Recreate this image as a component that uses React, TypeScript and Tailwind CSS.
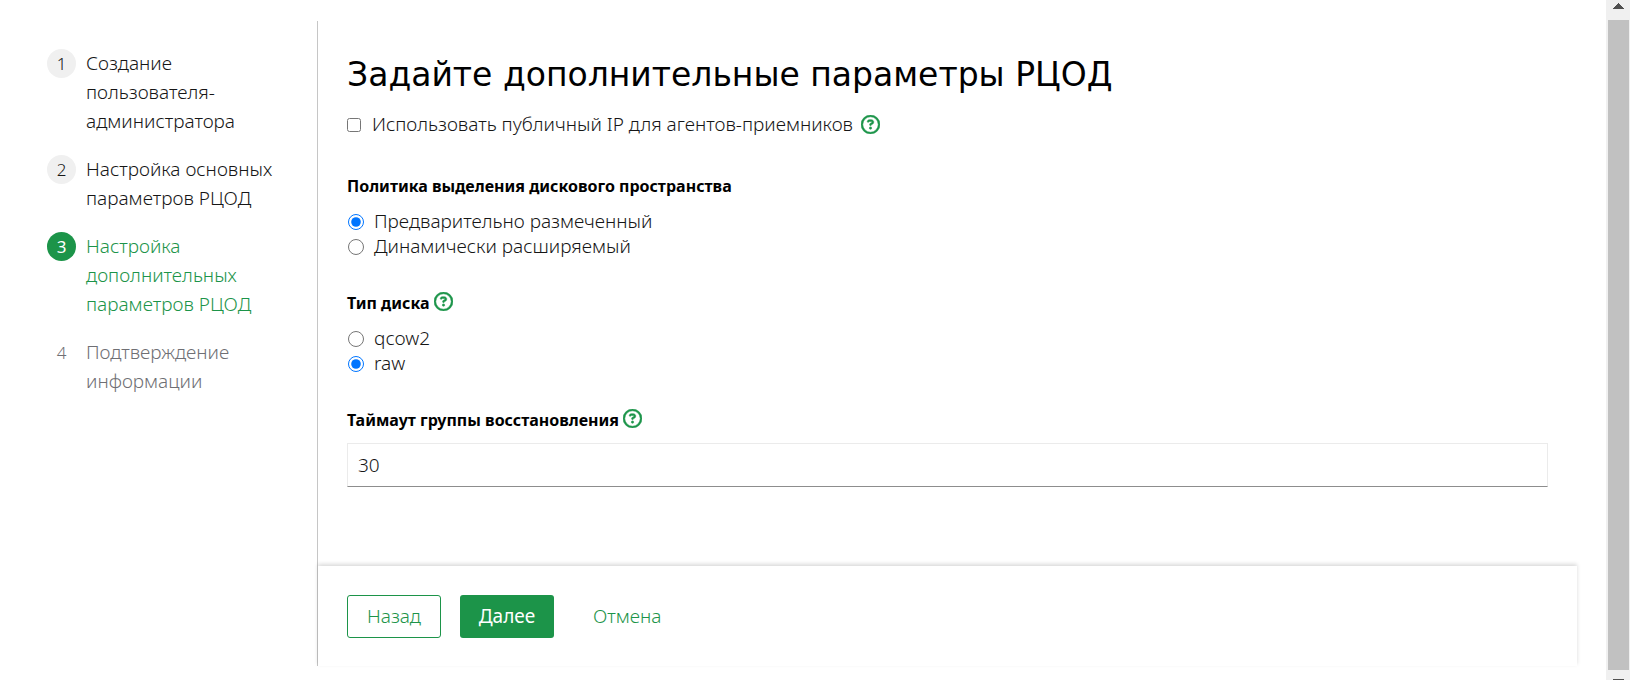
import { useState } from "react";
import { FaRegCircleQuestion } from "react-icons/fa6";

interface Step {
  title: string;
  state: "done" | "current" | "next";
}

const steps: Step[] = [
  { title: "Создание пользователя-администратора", state: "done" },
  { title: "Настройка основных параметров РЦОД", state: "done" },
  { title: "Настройка дополнительных параметров РЦОД", state: "current" },
  { title: "Подтверждение информации", state: "next" },
];

const textColor = {
  done: "text-[#161616]",
  current: "text-[#1c9449]",
  next: "text-[#6f6f74]",
};

const badgeColor = {
  done: "bg-[#f0f0f0] text-[#161616]",
  current: "bg-[#1c9449] text-white font-normal",
  next: "text-[#6f6f74]",
};

function Steps() {
  return (
    <ol className="flex w-[317px] shrink-0 flex-col gap-[19px] pt-7 pl-[47px] pr-8">
      {steps.map((step, i) => (
        <li key={step.title} className="flex gap-[10px]">
          <span className={`flex size-[29px] shrink-0 items-center justify-center rounded-full text-[17px] ${badgeColor[step.state]}`}>
            {i + 1}
          </span>
          <span className={`leading-[29px] ${textColor[step.state]}`}>{step.title}</span>
        </li>
      ))}
    </ol>
  );
}

function Help() {
  return (
    <button type="button" aria-label="Справка" className="flex h-[21px] shrink-0 items-center text-[#1c9449]">
      <FaRegCircleQuestion size={19} stroke="currentColor" strokeWidth={14} />
    </button>
  );
}

interface RadioGroupProps {
  name: string;
  title: string;
  options: string[];
  initial: string;
  help?: boolean;
}

function RadioGroup(props: RadioGroupProps) {
  const [value, setValue] = useState(props.initial);
  return (
    <fieldset className="mt-8">
      <div className="mb-[11px] flex items-start gap-1">
        <legend className="text-base font-bold text-black">{props.title}</legend>
        {props.help && <Help />}
      </div>
      {props.options.map((option) => (
        <label key={option} className="flex h-[25px] items-center gap-[10px]">
          <input
            type="radio"
            name={props.name}
            checked={value === option}
            onChange={() => setValue(option)}
            className="ml-px size-4"
          />
          {option}
        </label>
      ))}
    </fieldset>
  );
}

function ScrollBar() {
  return (
    <div aria-hidden="true" className="sticky top-0 flex h-screen w-6 shrink-0 flex-col overflow-hidden bg-[#f0f0f0] pr-px pl-[2px]">
      <svg viewBox="0 0 21 20" className="h-5 w-[21px] shrink-0" fill="#505050" shapeRendering="crispEdges">
        <path d="M10 3h1v1h1v1h1v1h1v1h1v1h1v1H5V8h1V7h1V6h1V5h1V4h1z" />
      </svg>
      <div className="flex-1 bg-[#c1c1c1]" />
      <div className="h-[10px] shrink-0">
        <svg viewBox="0 0 21 20" className="h-5 w-[21px]" fill="#505050" shapeRendering="crispEdges">
          <path d="M5 9h11v1h-1v1h-1v1h-1v1h-1v1h-1v1h-1v-1H9v-1H8v-1H7v-1H6v-1H5z" />
        </svg>
      </div>
    </div>
  );
}

export default function App() {
  const [publicIp, setPublicIp] = useState(false);
  const [timeout, setTimeoutValue] = useState("30");

  return (
    <div className="flex min-h-screen bg-white font-['Noto_Sans',sans-serif] text-[19px] font-light text-[#161616]">
      <div className="flex min-w-0 flex-1 pt-[21px] pr-[29px] pb-[14px]">
        <Steps />
        <form className="flex min-w-0 flex-1 flex-col border-l border-[#c6c6c6]" onSubmit={(e) => e.preventDefault()}>
          <div className="flex-1 px-[29px] pt-[30px] pb-16">
            <h1 className="font-['DejaVu_Sans',sans-serif] text-[33px] leading-[48px] font-normal text-black">
              Задайте дополнительные параметры РЦОД
            </h1>
            <div className="mt-2 flex h-[35px] items-center gap-2">
              <label className="flex items-center gap-[11px]">
                <input
                  type="checkbox"
                  checked={publicIp}
                  onChange={(e) => setPublicIp(e.target.checked)}
                  className="size-[14px]"
                />
                Использовать публичный IP для агентов-приемников
              </label>
              <Help />
            </div>
            <RadioGroup
              name="policy"
              title="Политика выделения дискового пространства"
              options={["Предварительно размеченный", "Динамически расширяемый"]}
              initial="Предварительно размеченный"
            />
            <RadioGroup name="disk" title="Тип диска" options={["qcow2", "raw"]} initial="raw" help />
            <div className="mt-8 mb-[11px] flex items-start gap-1">
              <label htmlFor="timeout" className="text-base font-bold text-black">Таймаут группы восстановления</label>
              <Help />
            </div>
            <input
              id="timeout"
              type="text"
              value={timeout}
              onChange={(e) => setTimeoutValue(e.target.value)}
              className="h-11 w-full border border-[#ebebeb] border-b-[#8d8d8d] px-[10px]"
            />
          </div>
          <div className="flex gap-[19px] bg-white px-[29px] pt-[29px] pb-7 shadow-[0_-2px_4px_rgba(0,0,0,0.15)]">
            <button type="button" className="h-[43px] min-w-[94px] rounded-[3px] border border-[#1c9449] text-[#1c9449]">Назад</button>
            <button type="submit" className="h-[43px] min-w-[94px] rounded-[3px] bg-[#1c9449] font-normal text-white">Далее</button>
            <button type="button" className="h-[43px] px-5 text-[#1c9449]">Отмена</button>
          </div>
        </form>
      </div>
      <ScrollBar />
    </div>
  );
}
